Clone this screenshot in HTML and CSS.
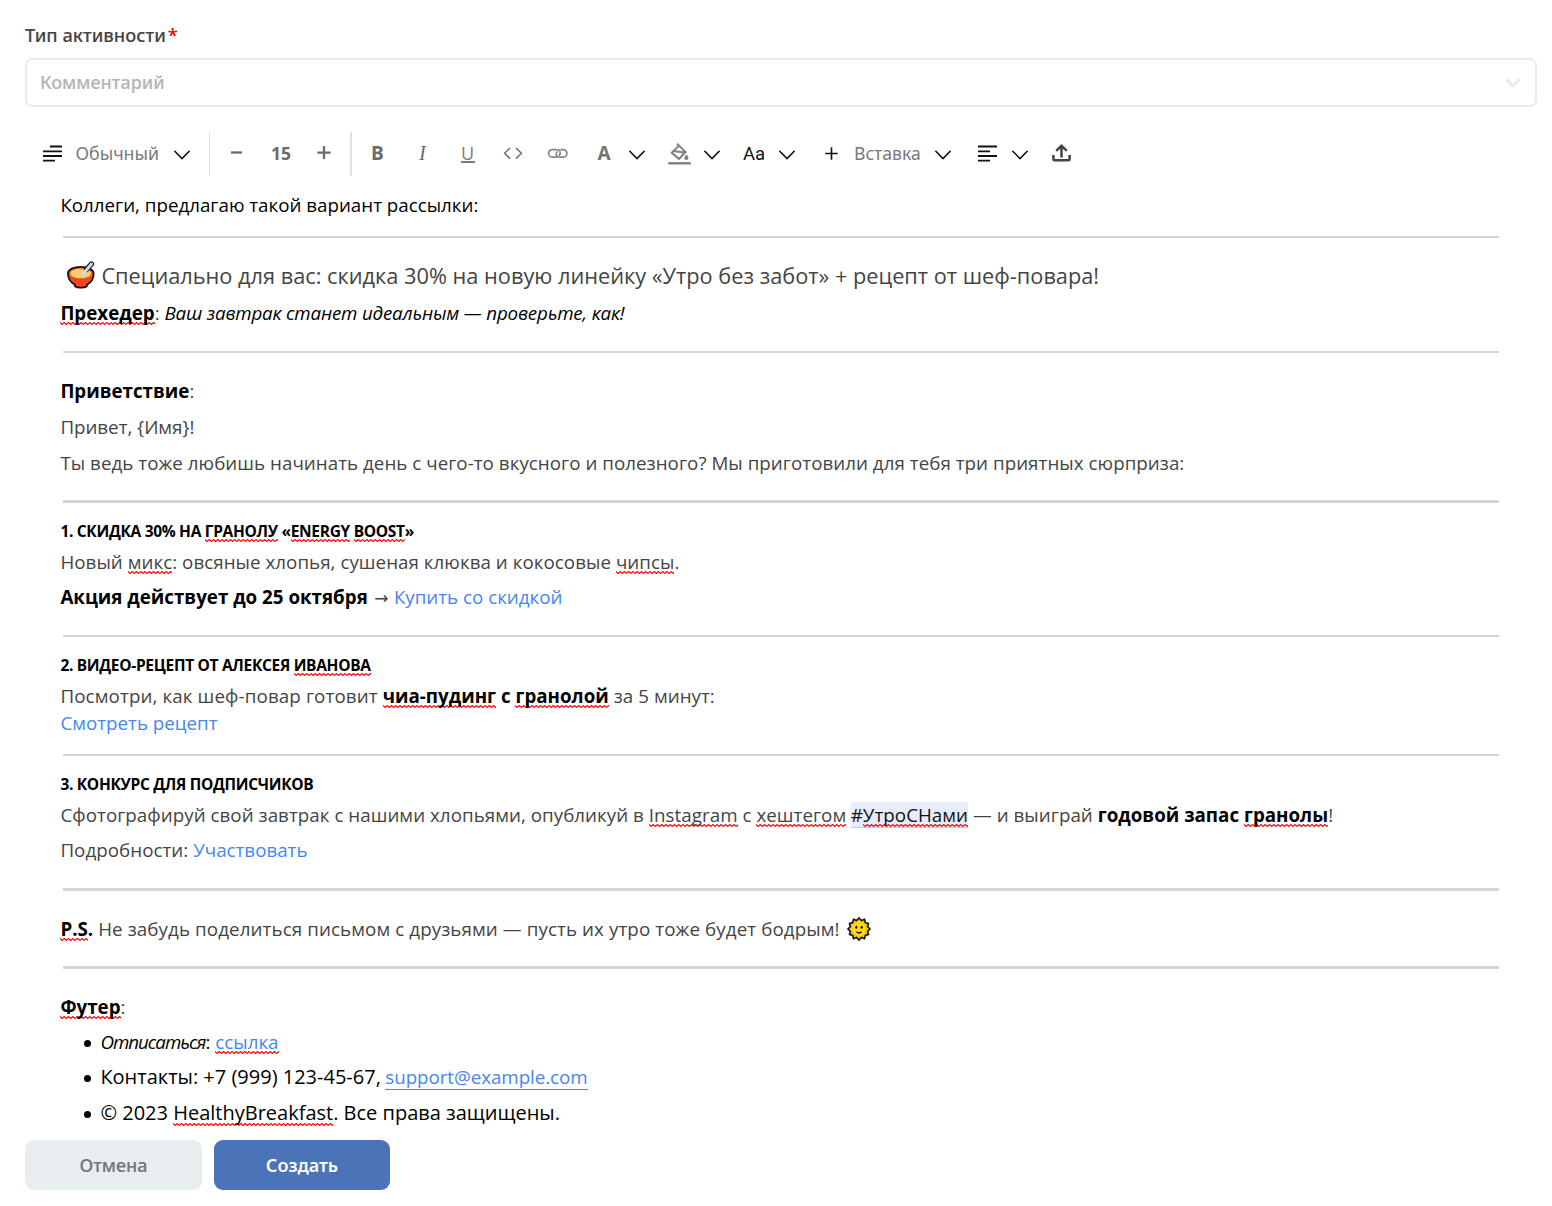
FILE: index.html
```html
<!DOCTYPE html>
<html lang="ru">
<head>
<meta charset="utf-8">
<title>Новая активность</title>
<link rel="stylesheet" href="styles.css">
</head>
<body>
<svg class="defs" aria-hidden="true">
  <symbol id="chevron" viewBox="0 0 16 44"><path d="M.4 18.8 8 26.6l7.6-7.8" fill="none" stroke="#111" stroke-width="1.5"/></symbol>
</svg>
<form class="activity">
  <label class="label">Тип активности<span class="required">*</span></label>
  <div class="select">
    <span>Комментарий</span>
    <svg width="16" height="12" viewBox="0 0 16 12"><path d="m2 3 6 6 6-6" fill="none" stroke="#e8e8e8" stroke-width="2.7" stroke-linecap="round" stroke-linejoin="round"/></svg>
  </div>

  <div class="toolbar">
    <div class="group group-style">
      <svg width="19" height="44"><path d="M7 14.5h12M0 19.400h19M0 24h19M0 28.600h12" stroke="#111" stroke-width="1.800"/></svg>
      <span class="tool-text style-name">Обычный</span>
      <svg class="chev"><use href="#chevron"/></svg>
    </div>
    <div class="group group-size">
      <svg class="cell" viewBox="0 0 44 44"><path d="M16 20.5h11" stroke="#6b6b6b" stroke-width="2.3"/></svg>
      <span class="cell size-value">15</span>
      <svg class="cell" viewBox="0 0 44 44"><path d="M14.5 20.6h13M21 14.1v13" stroke="#6b6b6b" stroke-width="2.3"/></svg>
    </div>
    <div class="group group-format">
      <span class="cell bold">B</span>
      <span class="cell italic">I</span>
      <span class="cell"><span class="underlined">U</span></span>
      <svg class="cell" viewBox="0 0 45 44"><path d="m20 16-5.4 5.3 5.4 5.3M26 16l5.400 5.300-5.400 5.300" fill="none" stroke="#707070" stroke-width="1.5"/></svg>
      <svg class="cell" viewBox="0 0 45 44"><g fill="none" stroke="#858585" stroke-width="1.7" stroke-linecap="round"><path d="M21 25.200h-3.500a3.800 3.800 0 0 1 0-7.600h4.500c3 0 4.300 3.200 2.400 5.400"/><path d="M26 17.600h2.100a3.800 3.800 0 0 1 0 7.600h-3.700c-3 0-4.300-3.200-2.400-5.400"/></g></svg>
    </div>
    <div class="group group-color">
      <span class="letter-a">A</span>
      <svg class="chev"><use href="#chevron"/></svg>
    </div>
    <div class="group group-fill">
      <svg width="23" height="44"><g fill="none" stroke="#808080" stroke-width="2"><path d="m9 11.600 8.500 8.400-6.500 7-7.300-6.400 7.700-7.400M4.500 19l12 1.500"/><path d="M.3 31.300h22.500" stroke-width="2.400"/></g><path d="M18.400 22.500c1.300 1.600 2.100 2.500 2.100 3.500a2.100 2.100 0 0 1-4.200 0c0-1 .8-1.900 2.100-3.500z" fill="#808080"/></svg>
      <svg class="chev"><use href="#chevron"/></svg>
    </div>
    <div class="group group-case">
      <span class="case">Aa</span>
      <svg class="chev"><use href="#chevron"/></svg>
    </div>
    <div class="group group-insert">
      <svg width="13" height="44"><path d="M.3 21.500h12.400M6.500 15.300v12.400" stroke="#111" stroke-width="1.600"/></svg>
      <span class="tool-text insert-name">Вставка</span>
      <svg class="chev"><use href="#chevron"/></svg>
    </div>
    <div class="group group-align">
      <svg width="19" height="44"><path d="M0 14.500h19M0 19.400h12M0 24h19M0 28.600h12" stroke="#111" stroke-width="1.800"/></svg>
      <svg class="chev"><use href="#chevron"/></svg>
    </div>
    <svg class="upload" width="19" height="44"><g fill="none" stroke="#444" stroke-width="2.500"><path d="M9.500 25.500V14M4.200 18.900l5.300-5.200 5.300 5.200"/><path d="M1.400 23v4.200q0 1.100 1.100 1.100h14q1.100 0 1.100-1.100V23"/></g></svg>
  </div>

  <div class="editor">
    <p class="dark">Коллеги, предлагаю такой вариант рассылки:</p>
    <hr class="hr-near">
    <h1><svg class="bowl" width="28" height="28" viewBox="0 0 28 28" role="img" aria-label="Миска"><path d="M.9 12.500c0-4.200 6-6.600 12.700-6.600 7 0 13.100 2.400 13.100 6.600 0 5.400-3 9.300-6.800 11.300v1.500c-2.200 1.800-9.800 1.800-12 0v-1.500c-3.600-2-7-5.900-7-11.300z" fill="#ee4420" stroke="#111" stroke-width="1.700"/><ellipse cx="13.800" cy="12.500" rx="11" ry="5.300" fill="#f9cd70" stroke="#e8492a" stroke-width=".8"/><path d="m19.500 8.500 5-5.500" stroke="#111" stroke-width="5.200" stroke-linecap="round"/><path d="m16 13 8.500-10" stroke="#d5dbe0" stroke-width="3" stroke-linecap="round"/></svg>Специально для вас: скидка 30% на новую линейку «Утро без забот» + рецепт от шеф-повара!</h1>
    <p class="gap-s"><b class="typo">Прехедер</b>: <i class="tagline">Ваш завтрак станет идеальным — проверьте, как!</i></p>
    <hr>
    <p class="gap-l"><b>Приветствие</b>:</p>
    <p class="gap-m greeting">Привет, {Имя}!</p>
    <p class="gap-m">Ты ведь тоже любишь начинать день с чего-то вкусного и полезного? Мы приготовили для тебя три приятных сюрприза:</p>
    <hr class="thick">
    <h2>1. СКИДКА 30% НА <span class="typo">ГРАНОЛУ</span> «<span class="typo">ENERGY</span> <span class="typo">BOOST</span>»</h2>
    <p class="gap-s">Новый <span class="typo">микс</span>: овсяные хлопья, сушеная клюква и кокосовые <span class="typo">чипсы</span>.</p>
    <p class="gap-s"><b>Акция действует до 25 октября</b> <span class="arrow">→</span> <a>Купить со скидкой</a></p>
    <hr>
    <h2>2. ВИДЕО-РЕЦЕПТ ОТ АЛЕКСЕЯ <span class="typo">ИВАНОВА</span></h2>
    <p class="gap-s"><span class="wide">Посмотри, как шеф-повар готовит</span> <b><span class="typo">чиа-пудинг</span> с <span class="typo">гранолой</span></b> за 5 минут:</p>
    <p class="next-line"><a>Смотреть рецепт</a></p>
    <hr class="hr-near">
    <h2>3. КОНКУРС ДЛЯ ПОДПИСЧИКОВ</h2>
    <p class="gap-s">Сфотографируй свой завтрак с нашими хлопьями, опубликуй в <span class="typo">Instagram</span> с <span class="typo">хештегом</span> <span class="hashtag">#<span class="typo">УтроСНами</span></span> — и выиграй <b>годовой запас <span class="typo">гранолы</span></b>!</p>
    <p class="gap-s">Подробности: <a>Участвовать</a></p>
    <hr class="thick-far">
    <p class="gap-l"><b><span class="typo">P.</span><span class="typo">S</span>.</b> <span class="postscript">Не забудь поделиться письмом с друзьями — пусть их утро тоже будет бодрым!</span><svg class="sun" width="26" height="26" viewBox="-13 -13 26 26" role="img" aria-label="Солнце"><path d="M0-11 2.500-8.500 5.500-9.700 6.300-6.500 9.500-5.500 8.600-2.500 11 0 8.600 2.500 9.500 5.500 6.300 6.500 5.500 9.700 2.500 8.500 0 11-2.500 8.500-5.500 9.700-6.300 6.500-9.500 5.500-8.600 2.500-11 0-8.600-2.500-9.500-5.500-6.300-6.500-5.500-9.700-2.500-8.500z" fill="#f9c513" stroke="#111" stroke-width="1.600"/><circle r="7" fill="#ffdc10"/><ellipse cx="-2.700" cy="-1.800" rx="1" ry="1.500"/><ellipse cx="2.700" cy="-1.800" rx="1" ry="1.500"/><path d="M-2.600 2.800q2.600 2.300 5.200 0" fill="none" stroke="#111" stroke-width="1.300"/></svg></p>
    <hr class="thick">
    <p class="gap-l"><b class="typo">Футер</b>:</p>
    <ul>
      <li><span><i class="unsubscribe">Отписаться</i>: <a class="typo">ссылка</a></span></li>
      <li><span class="contacts">Контакты: +7 (999) 123-45-67,</span><a class="mail">support@example.com</a></li>
      <li class="large"><span>© 2023 <span class="typo">HealthyBreakfast</span>. Все права защищены.</span></li>
    </ul>
  </div>

  <div class="actions">
    <button type="button" class="btn">Отмена</button>
    <button type="button" class="btn btn-primary">Создать</button>
  </div>
</form>
</body>
</html>
```
FILE: styles.css
```css
* { box-sizing: border-box; }
body {
  margin: 0;
  background: #fff;
  color: #444;
  font-family: "Open Sans", "Noto Sans", sans-serif;
  font-size: 18.75px;
}
svg { display: block; flex: none; }
.defs { width: 0; height: 0; display: none; }
.activity { padding: 22px 15px 16px 25px; }

.label {
  display: flex;
  gap: 2px;
  height: 26px;
  font: 500 18.300px/26px "Noto Sans", sans-serif;
  -webkit-text-stroke: .1px;
  color: #444;
}
.required { color: #f00; }
.select {
  display: flex;
  align-items: center;
  justify-content: space-between;
  height: 49px;
  margin-top: 10px;
  padding: 0 14px 0 13px;
  border: 2px solid #ebebeb;
  border-radius: 7px;
  font: 500 18px/26px "Noto Sans", sans-serif;
  -webkit-text-stroke: .15px;
  color: #b5b5b5;
}
.select span { padding-bottom: 2px; }

.toolbar {
  display: flex;
  height: 44px;
  margin-top: 25px;
  line-height: 43px;
}
.group { display: flex; }
.chev { width: 16px; height: 44px; }
.tool-text { color: #7a7a7a; font: 17.800px/43px "Noto Sans", sans-serif; white-space: nowrap; }
.style-name { width: 86px; margin: 0 12.500px 0 13.500px; }
.group-style { width: 185px; padding-left: 18px; border-right: 1px solid #ddd; }
.group-size { width: 142px; padding-left: 5px; border-right: 2px solid #e0e0e0; }
.group-size .cell { width: 44px; height: 44px; text-align: center; }
.size-value { font-size: 17.5px; font-weight: 700; color: #6b6b6b; }
.group-format { margin-left: 3px; }
.group-format .cell {
  display: flex;
  justify-content: center;
  width: 45px;
  height: 44px;
  color: #6b6b6b;
}
.group-format .bold { font-size: 19px; line-height: 42px; font-weight: 700; }
.group-format .italic { font: italic 20.500px/42px "Liberation Serif", serif; }
.underlined {
  display: flex;
  justify-content: center;
  width: 14px;
  height: 31px;
  border-bottom: 2px solid #7a7a7a;
  font-size: 18px;
  line-height: 42px;
  color: #7a7a7a;
}
.group-color { margin-left: 17.500px; }
.letter-a { width: 14px; margin-right: 17.500px; font: 700 19px/42px "Noto Sans", sans-serif; color: #757575; }
.group-fill { margin-left: 23px; gap: 13px; }
.group-case { margin-left: 23px; }
.case { width: 22px; margin-right: 14px; font: 400 18.500px/44px Roboto, sans-serif; color: #111; }
.group-insert { margin-left: 30px; }
.insert-name { width: 67px; margin: 0 14px 0 16px; font-size: 17.600px; }
.group-align { margin-left: 27px; gap: 15px; }
.upload { margin-left: 24px; }

.editor { margin-top: 16px; padding: 0 38px 0 35.400px; }
p, h1, h2, ul { margin: 0; }
p, li { line-height: 26px; height: 26px; white-space: nowrap; letter-spacing: .04px; }
b { color: #000; letter-spacing: 0; }
i { color: #000; letter-spacing: 0; }
a { color: #4486f4; letter-spacing: 0; }
.dark { color: #000; letter-spacing: 0; }
.gap-s { margin-top: 9px; }
h2 + .gap-s { margin-top: 8px; }
.gap-m { margin-top: 10px; }
.gap-l { margin-top: 25px; }
.next-line { margin-top: 1px; }
.wide { letter-spacing: .12px; }
.postscript { letter-spacing: .1px; }
.greeting { letter-spacing: -.02px; }
.tagline { letter-spacing: -.18px; }

hr {
  height: 2px;
  margin: 25px 0 0 2.600px;
  border: 0;
  background: #d4d4d4;
}
.hr-near { margin-top: 18px; }
.thick { height: 3px; margin-top: 24px; }
.thick-far { height: 3px; }

h1 {
  display: flex;
  height: 30px;
  margin-top: 23px;
  font-size: 21.760px;
  font-weight: 400;
  line-height: 30px;
  white-space: nowrap;
}
.bowl { margin: 0 6.500px 0 6.500px; }
h2 {
  height: 20px;
  margin-top: 18px;
  font-size: 15.500px;
  font-weight: 700;
  line-height: 20px;
  letter-spacing: -.31px;
  color: #000;
}
.typo {
  background: url("data:image/svg+xml,%3Csvg xmlns='http://www.w3.org/2000/svg' width='20' height='3'%3E%3Cpath d='M-2.500 2.500 0 .5l2.500 2 2.500-2 2.500 2 2.500-2 2.500 2 2.500-2 2.500 2 2.500-2 2.500 2' fill='none' stroke='%23f00' stroke-width='1.200'/%3E%3C/svg%3E") 0 100% / 17px 3px repeat-x;
}
.arrow { margin: 0 .5px 0 1.500px; font: 17px/1 "DejaVu Sans", sans-serif; }
.hashtag { margin-left: -.5px; color: #111; background: #e7edfe; border-bottom: 1px solid #bfd0f7; }

ul { padding: 0; list-style: none; }
li { display: flex; align-items: center; margin-top: 9px; color: #000; }
li:last-child { margin-top: 10px; }
li::before {
  content: "";
  width: 7px;
  height: 7px;
  margin: 2px 9px 0 24px;
  border-radius: 50%;
  background: #000;
}
.unsubscribe { letter-spacing: -1px; }
.large, .contacts { font-size: 20px; letter-spacing: 0; }
.contacts { margin-right: 4.500px; }
.mail { height: 26px; border-bottom: 1px solid #4486f4; letter-spacing: -.05px; }
.sun { display: inline-block; margin: -4px 0 0 6px; vertical-align: middle; }

.actions { display: flex; gap: 12px; margin-top: 14px; }
.btn {
  width: 177px;
  height: 50px;
  padding: 0;
  border: 0;
  border-radius: 9px;
  background: #e8edf0;
  color: #757575;
  font: 500 18px "Noto Sans", sans-serif;
  -webkit-text-stroke: .15px;
}
.btn-primary { width: 176px; background: #4b73b7; color: #fff; -webkit-text-stroke: 0; font-weight: 600; }
```
